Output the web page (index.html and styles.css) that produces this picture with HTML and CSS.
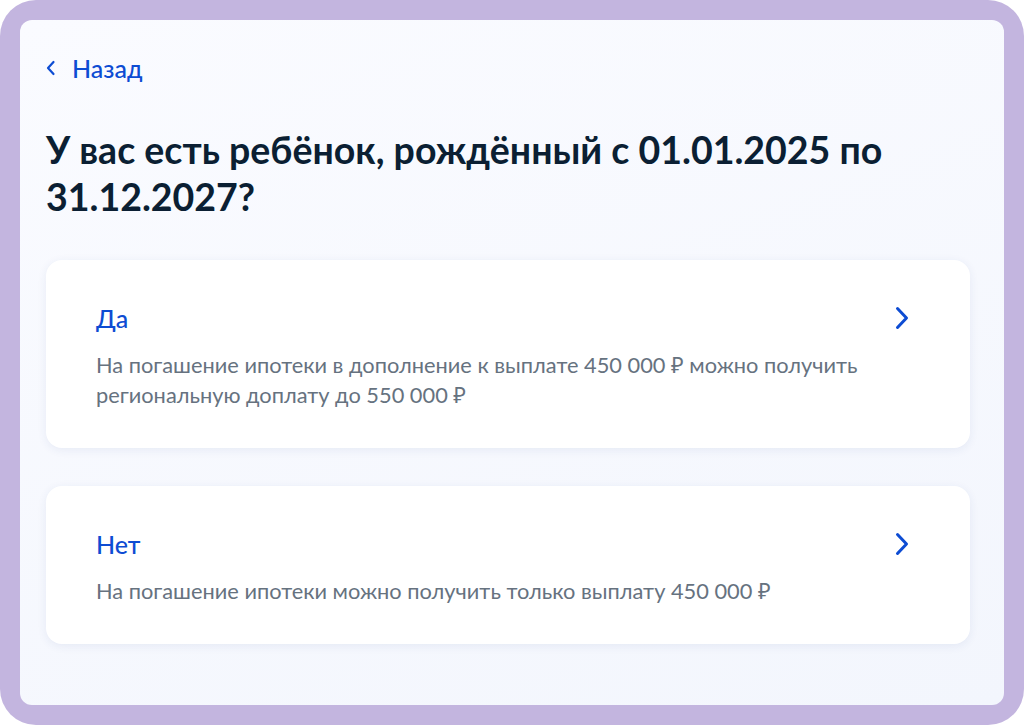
FILE: index.html
```html
<!DOCTYPE html>
<html lang="ru">
<head>
  <meta charset="UTF-8">
  <title>Выплата на погашение ипотеки</title>
  <link rel="stylesheet" href="styles.css">
</head>
<body>
  <div class="frame">
    <div class="panel">
      <a class="back" href="#">
        <svg width="10" height="16" viewBox="0 0 10 16"><path d="M7.5 2 L2 8 L7.5 14" fill="none" stroke="#0d4cd3" stroke-width="2.2" stroke-linecap="round" stroke-linejoin="round"/></svg>
        <span>Назад</span>
      </a>

      <h1>У вас есть ребёнок, рождённый с 01.01.2025 по 31.12.2027?</h1>

      <div class="options">
        <a class="option" href="#">
          <div class="option-text">
            <div class="option-title">Да</div>
            <p class="option-desc">На погашение ипотеки в дополнение к выплате 450 000 ₽ можно получить региональную доплату до 550 000 ₽</p>
          </div>
          <svg class="arrow" width="16" height="24" viewBox="0 0 16 24"><path d="M3.5 2.5 L12.5 12 L3.5 21.5" fill="none" stroke="#0d4cd3" stroke-width="3" stroke-linecap="round" stroke-linejoin="round"/></svg>
        </a>

        <a class="option" href="#">
          <div class="option-text">
            <div class="option-title">Нет</div>
            <p class="option-desc">На погашение ипотеки можно получить только выплату 450 000 ₽</p>
          </div>
          <svg class="arrow" width="16" height="24" viewBox="0 0 16 24"><path d="M3.5 2.5 L12.5 12 L3.5 21.5" fill="none" stroke="#0d4cd3" stroke-width="3" stroke-linecap="round" stroke-linejoin="round"/></svg>
        </a>
      </div>
    </div>
  </div>
</body>
</html>
```

FILE: styles.css
```css
* {
  box-sizing: border-box;
}
body {
  margin: 0;
  background: #ffffff;
  font-family: Lato, "Noto Sans", sans-serif;
}
.frame {
  height: 725px;
  padding: 20px;
  background: #c3b5df;
  border-radius: 36px;
}
.panel {
  height: 100%;
  padding: 33px 34px 0 26px;
  background: linear-gradient(160deg, #fafbff, #f3f6fd);
  border-radius: 12px;
}
.back {
  display: inline-flex;
  align-items: center;
  gap: 16px;
  color: #0d4cd3;
  text-decoration: none;
  font-size: 25px;
  line-height: 30px;
  font-weight: 500;
}
.back svg {
  display: block;
}
h1 {
  margin: 43px 0 40px;
  color: #0b1f33;
  font-size: 37.5px;
  line-height: 47px;
  font-weight: 700;
}
.options {
  display: flex;
  flex-direction: column;
  gap: 38px;
}
.option {
  display: flex;
  align-items: flex-start;
  justify-content: space-between;
  padding: 43px 60px 38px 50px;
  background: #ffffff;
  border-radius: 16px;
  box-shadow: 0 2px 10px rgba(40, 70, 140, 0.08);
  text-decoration: none;
}
.option-title {
  color: #0d4cd3;
  font-size: 25px;
  line-height: 30px;
  font-weight: 500;
}
.option-desc {
  margin: 17px 0 0;
  color: #66727f;
  font-size: 21.8px;
  line-height: 30px;
  max-width: 790px;
}
.arrow {
  margin-top: 3px;
  flex-shrink: 0;
}
```
